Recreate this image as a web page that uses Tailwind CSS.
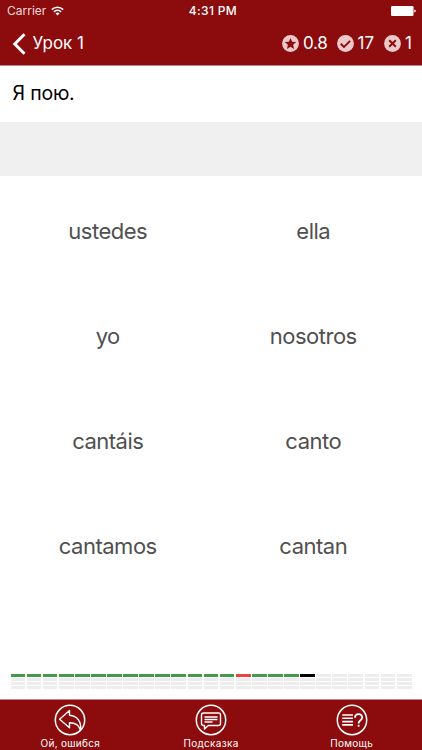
<!DOCTYPE html>
<html lang="ru">
<head>
  <meta charset="UTF-8" />
  <meta name="viewport" content="width=device-width, initial-scale=1.0"/>
  <title>Урок 1</title>
  <script src="https://cdn.jsdelivr.net/npm/@tailwindcss/browser@4"></script>
  <style>
    body {
      font-family: 'Inter', 'Liberation Sans', sans-serif;
    }
  </style>
</head>
<body class="bg-white">
  <div class="w-[422px] h-[750px] flex flex-col overflow-hidden">

    <header class="h-[66px] shrink-0 bg-[#8c0b0d] border-b border-[#c98587] text-white">
      <div class="h-[22px] grid grid-cols-3 items-center pl-[7px] pr-[6px] text-[12px] leading-none">
        <div class="flex items-center gap-[5px] text-[#f3dcdc]">
          <span>Carrier</span>
          <svg class="w-[13px] h-[10px]" viewBox="0 0 13 10" fill="none" stroke="#fff" stroke-width="1.6">
            <path d="M.8 3.6a8.2 8.2 0 0 1 11.4 0M2.9 5.8a5.2 5.2 0 0 1 7.2 0"/>
            <path d="M4.5 7.4a3 3 0 0 1 4 0L6.5 9.5z" fill="#fff" stroke="none"/>
          </svg>
        </div>
        <span class="pl-[3px] text-center font-medium tracking-[0.35px]">4:31 PM</span>
        <svg class="justify-self-end w-[25px] h-[10px]" viewBox="0 0 25 10" fill="#fff">
          <rect width="22.5" height="10" rx="1.2"/>
          <path d="M23.3 3.4q1.5.3 1.5 1.6t-1.5 1.6z"/>
        </svg>
      </div>

      <div class="h-[43px] flex items-center justify-between pl-[12px] pr-[10px] text-[17px] leading-none">
        <a href="#" class="flex items-center gap-[6.5px]">
          <svg class="w-[14px] h-[22px]" viewBox="0 0 14 22" fill="none" stroke="#fff" stroke-width="3">
            <path d="M12.5 1.2 2.8 11l9.7 9.8"/>
          </svg>
          <span>Урок 1</span>
        </a>
        <div class="flex items-center">
          <svg class="w-[17px] h-[17px]" viewBox="0 0 17 17">
            <circle cx="8.5" cy="8.5" r="8.4" fill="#ebc9ca"/>
            <path d="M8.5 2.9l1.6 3.9 4.1.3-3.1 2.7 1 4.1-3.6-2.2-3.6 2.2 1-4.1-3.1-2.7 4.1-.3z" fill="#8c0b0d"/>
          </svg>
          <span class="ml-[4px] mr-[9px] tracking-[-0.3px]">0.8</span>
          <svg class="w-[17px] h-[17px]" viewBox="0 0 17 17">
            <circle cx="8.5" cy="8.5" r="8.4" fill="#ebc9ca"/>
            <path d="M3.7 8.7 7 11.9l6.1-6.1" fill="none" stroke="#8c0b0d" stroke-width="1.9"/>
          </svg>
          <span class="ml-[4px] mr-[9.5px]">17</span>
          <svg class="w-[17px] h-[17px]" viewBox="0 0 17 17">
            <circle cx="8.5" cy="8.5" r="8.4" fill="#ebc9ca"/>
            <path d="m5.2 5.2 6.6 6.6m0-6.6-6.6 6.6" fill="none" stroke="#8c0b0d" stroke-width="2"/>
          </svg>
          <span class="ml-[4.5px]">1</span>
        </div>
      </div>
    </header>

    <main class="flex-1 flex flex-col">
      <p class="h-[56px] flex items-center pl-[12.5px] text-[19.5px] tracking-[-0.2px] text-black">Я пою.</p>
      <div class="h-[54px] bg-[#f0f0f0]"></div>

      <div class="h-[420px] mt-[3px] pl-[5px] pr-[6px] grid grid-cols-2 grid-rows-4 text-[22px] tracking-[-0.5px] text-[#505050]">
        <button>ustedes</button>
        <button>ella</button>
        <button>yo</button>
        <button>nosotros</button>
        <button>cantáis</button>
        <button>canto</button>
        <button>cantamos</button>
        <button>cantan</button>
      </div>

      <div id="progress" class="mt-auto mb-[10px] mx-[10.5px] grid grid-cols-25 gap-x-[1.3px] gap-y-px"></div>
    </main>

    <footer class="h-[51px] shrink-0 bg-[#8c0b0d] border-t border-[#c98587] grid grid-cols-3 text-white text-[10px] leading-none tracking-[0.3px]">
      <a href="#" class="flex flex-col items-center pt-[3.5px] gap-[2px]">
        <svg class="w-[32px] h-[32px]" viewBox="0 0 32 32" fill="none" stroke="#fff" stroke-width="1.4">
          <circle cx="16" cy="16" r="14.7" stroke-width="1.5"/>
          <path d="M15.5 6.5 5.6 15.2l9.9 8.6v-5c6 0 9.600 2.300 11 7.400 1.200-8-3-14.400-11-14.900z" stroke-linejoin="round"/>
        </svg>
        <span>Ой, ошибся</span>
      </a>
      <a href="#" class="flex flex-col items-center pt-[3.5px] gap-[2px]">
        <svg class="w-[32px] h-[32px]" viewBox="0 0 32 32" fill="none" stroke="#fff" stroke-width="1.4">
          <circle cx="16" cy="16" r="14.7" stroke-width="1.5"/>
          <path d="M8.500 9h15q2 0 2 2v8.500q0 2-2 2H13.300L9.500 25v-3.500h-1q-2 0-2-2V11q0-2 2-2z" stroke-linejoin="round"/>
          <path d="M9.500 13h13M9.500 15.500h13M9.500 18h8"/>
        </svg>
        <span>Подсказка</span>
      </a>
      <a href="#" class="flex flex-col items-center pt-[3.5px] gap-[2px]">
        <svg class="w-[32px] h-[32px]" viewBox="0 0 32 32" fill="none" stroke="#fff" stroke-width="1.6">
          <circle cx="16" cy="16" r="14.7" stroke-width="1.5"/>
          <path d="M6.2 11h10.800M6.2 14.300h10.800M6.2 17.600h10.800M6.2 20.900h10.800"/>
          <path d="M19 13.700c0-4.600 7.200-4.600 7.200-.2 0 2.900-3.600 2.700-3.600 5.900M22.600 20.800v1.900" stroke-width="1.800"/>
        </svg>
        <span>Помощь</span>
      </a>
    </footer>
  </div>

  <script>
    // g = верно, r = ошибка, k = текущий вопрос
    const answers = "ggggggggggggggrgggk";
    const colors = { g: "bg-[#439a49]", r: "bg-[#e8453c]", k: "bg-black" };
    const progress = document.getElementById("progress");

    for (let i = 0; i < 100; i++) {
      const cell = document.createElement("div");
      cell.className = "h-[3px] " + (colors[answers[i]] || "bg-[#ededed]");
      progress.appendChild(cell);
    }
  </script>
</body>
</html>
